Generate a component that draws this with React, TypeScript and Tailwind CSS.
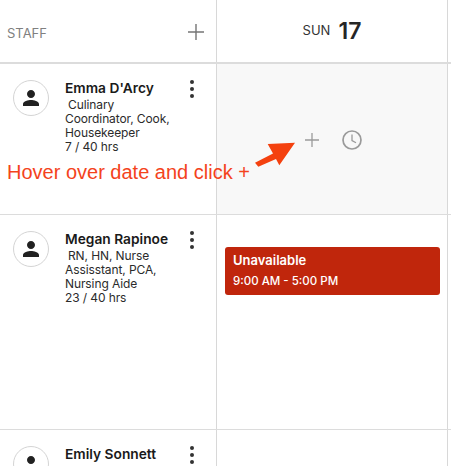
const PersonIcon = () => (
  <div className="w-9 h-9 rounded-full border border-[#d4d4d4] flex items-center justify-center shrink-0 bg-white">
    <svg width="24" height="24" viewBox="0 0 24 24" fill="#212121">
      <path d="M12 12c2.21 0 4-1.79 4-4s-1.79-4-4-4-4 1.79-4 4 1.79 4 4 4zm0 2c-2.67 0-8 1.34-8 4v2h16v-2c0-2.66-5.33-4-8-4z" />
    </svg>
  </div>
);

const MoreIcon = () => (
  <div className="flex flex-col gap-[3px] items-center w-1 shrink-0">
    <span className="w-1 h-1 rounded-full bg-[#333]" />
    <span className="w-1 h-1 rounded-full bg-[#333]" />
    <span className="w-1 h-1 rounded-full bg-[#333]" />
  </div>
);

const StaffCell = ({
  name,
  roles,
  hours,
  className,
}: {
  name: string;
  roles?: string[];
  hours?: string;
  className: string;
}) => (
  <div className={`flex pl-[13px] pt-[16px] border-r border-[#d8d8d8] overflow-hidden ${className}`}>
    <PersonIcon />
    <div className="ml-4 w-[118px] shrink-0">
      <div className="text-[13.75px] leading-[17px] font-semibold text-[#1a1a1a] whitespace-nowrap">{name}</div>
      {roles && (
        <div className="text-[12px] tracking-[-0.1px] leading-[14px] text-[#2b2b2b] mt-[1px]">
          {roles.map((r, i) => (
            <div key={r} className={`whitespace-nowrap ${i === 0 ? "pl-[3px]" : ""}`}>
              {r}
            </div>
          ))}
          <div>{hours}</div>
        </div>
      )}
    </div>
    <div className="ml-[7px]">
      <MoreIcon />
    </div>
  </div>
);

export default function App() {
  return (
    <div className="relative w-[451px] h-[466px] overflow-hidden bg-white font-['Inter',sans-serif]">
      <div className="grid grid-cols-[217px_231px_3px] grid-rows-[62px_2px_150px_1px_214px_1px_36px]">
        {/* header */}
        <div className="flex items-center justify-between pl-[7px] pr-[12px] pt-[4px] border-r border-[#d8d8d8]">
          <span className="text-[13px] text-[#808080] mt-[2px]">STAFF</span>
          <svg width="16" height="16" viewBox="0 0 16 16" stroke="#757575" strokeWidth="1.4" className="mb-[3px]">
            <path d="M8 0v16M0 8h16" />
          </svg>
        </div>
        <div className="flex items-center justify-center gap-[8px] border-r border-[#d8d8d8]">
          <span className="text-[13px] text-[#333]">SUN</span>
          <span className="text-[23px] leading-[28px] font-semibold text-[#262626]">17</span>
        </div>
        <div />
        <div className="col-span-3 bg-[#dcdcdc]" />

        {/* row 1 */}
        <StaffCell
          name="Emma D'Arcy"
          roles={["Culinary", "Coordinator, Cook,", "Housekeeper"]}
          hours="7 / 40 hrs"
          className=""
        />
        <div className="flex items-center pl-[88px] gap-[22px] pt-[2px] bg-[#f8f8f8] border-r border-[#d8d8d8]">
          <svg width="14" height="14" viewBox="0 0 14 14" stroke="#9a9a9a" strokeWidth="1.3">
            <path d="M7 0v14M0 7h14" />
          </svg>
          <svg width="22" height="22" viewBox="0 0 22 22" fill="none" stroke="#9a9a9a" strokeWidth="1.7">
            <circle cx="11" cy="11" r="9" />
            <path d="M11 5.5v6l4 2.2" strokeWidth="1.3" />
          </svg>
        </div>
        <div />
        <div className="col-span-3 bg-[#dcdcdc]" />

        {/* row 2 */}
        <StaffCell
          name="Megan Rapinoe"
          roles={["RN, HN, Nurse", "Assisstant, PCA,", "Nursing Aide"]}
          hours="23 / 40 hrs"
          className=""
        />
        <div className="border-r border-[#d8d8d8] pt-[32px] pl-[8px] pr-[7px]">
          <div className="bg-[#c0260c] rounded-[3px] h-[48px] px-2 pt-[4px] text-white">
            <div className="text-[13px] leading-[18px] font-semibold">Unavailable</div>
            <div className="text-[11.5px] leading-[14px] mt-[5px] font-medium">9:00 AM - 5:00 PM</div>
          </div>
        </div>
        <div />
        <div className="col-span-3 bg-[#dcdcdc]" />

        {/* row 3 */}
        <StaffCell name="Emily Sonnett" className="h-[36px]" />
        <div className="border-r border-[#d8d8d8]" />
        <div />
      </div>

      {/* annotation over the grid */}
      <div className="absolute left-[7px] top-[161px] text-[20px] leading-[23px] text-[#f4431c] font-['Liberation_Sans',sans-serif] whitespace-nowrap">
        Hover over date and click +
      </div>
      <svg className="absolute left-[254px] top-[141px]" width="44" height="26" viewBox="0 0 44 26" fill="#f4410f">
        <path d="M1 21.700L19 12.500L13.700 3L41 1.700L25.300 24.300L22 18L4.300 25.700z" />
      </svg>
    </div>
  );
}
